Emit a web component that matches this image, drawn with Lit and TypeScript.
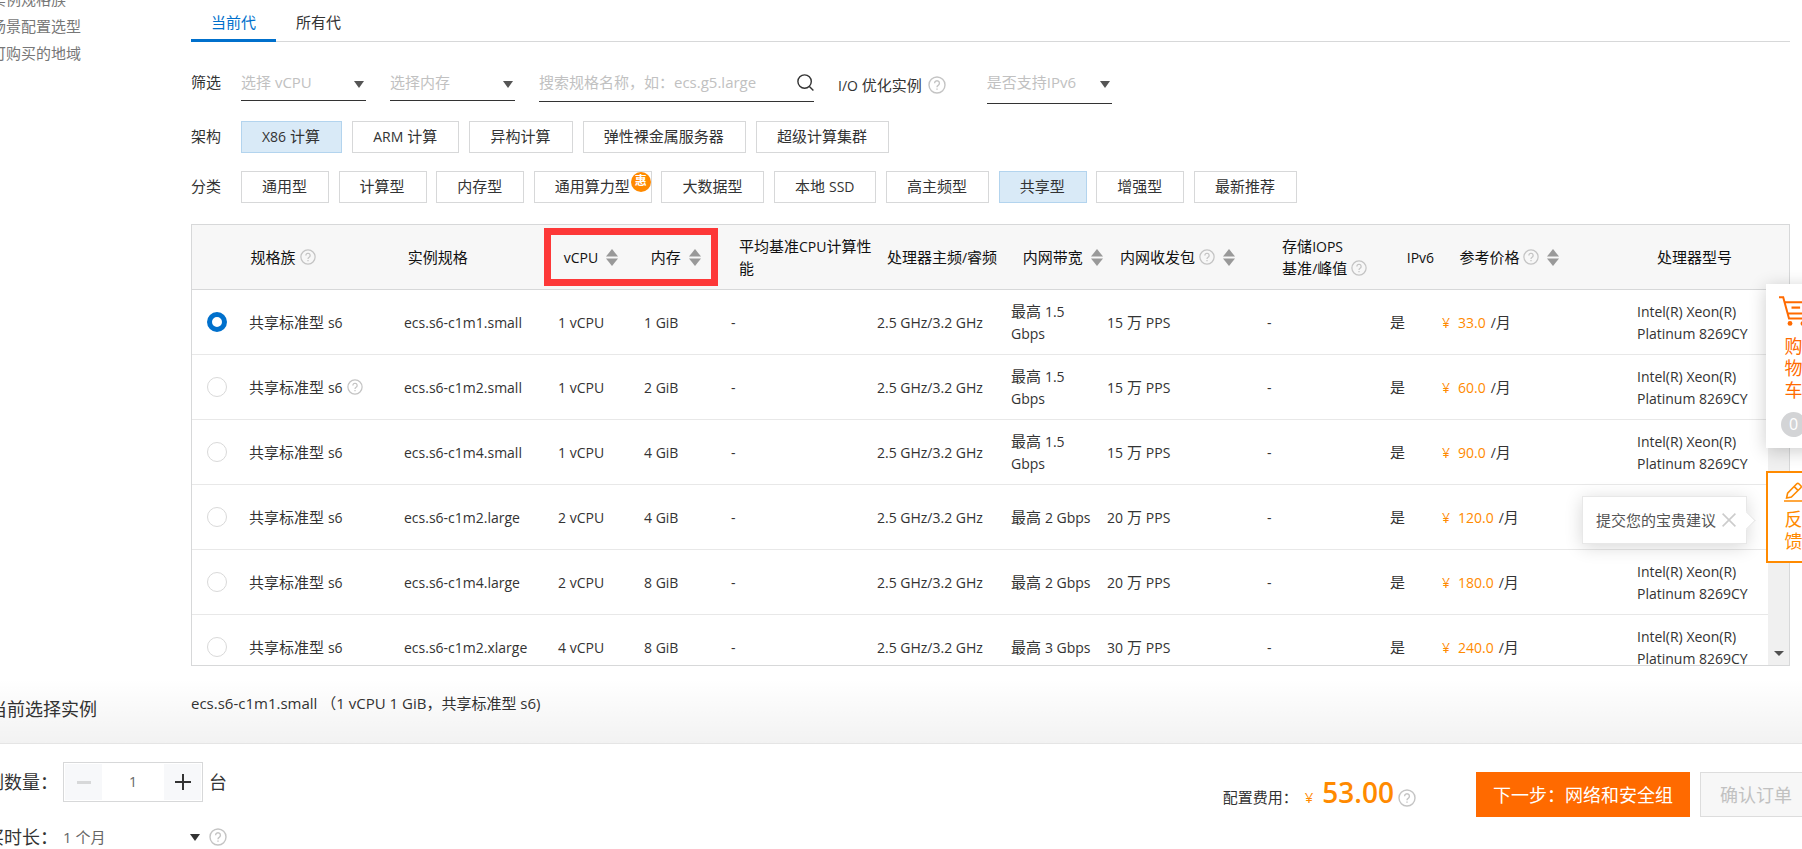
import { LitElement, html, svg, css, nothing } from "lit";
import { customElement, property, state } from "lit/decorators.js";
import { classMap } from "lit/directives/class-map.js";

/* Latin runs are set one step smaller than the Chinese text around them. */
const mix = (text: string) =>
  text
    .split(/([\x21-\x7e]+(?: +[\x21-\x7e]+)*)/)
    .filter((part) => part !== "")
    .map((part) => (/^[\x20-\x7e]+$/.test(part) ? html`<span class="lat">${part}</span>` : part));

const base = css`
  * {
    box-sizing: border-box;
  }
  .lat {
    font-size: 14px;
    line-height: 16px;
  }
  button,
  input,
  select {
    font: inherit;
    color: inherit;
    margin: 0;
    border-radius: 0;
  }
`;

@customElement("help-icon")
class HelpIcon extends LitElement {
  @property({ type: Number }) size = 16;
  static styles = css`
    :host {
      display: inline-flex;
      flex: none;
      color: #c4c4c4;
    }
  `;
  render() {
    return html`<svg width=${this.size} height=${this.size} viewBox="0 0 18 18" fill="none" stroke="currentColor" stroke-width="1.4" aria-hidden="true">
      <circle cx="9" cy="9" r="8"></circle>
      <path d="M6.6 7.2a2.4 2.4 0 1 1 3.6 2.1c-.8.5-1.2.9-1.2 1.9"></path>
      <path d="M9 12.4v1.4"></path>
    </svg>`;
  }
}

@customElement("sort-icon")
class SortIcon extends LitElement {
  static styles = css`
    :host {
      display: inline-flex;
      flex: none;
      color: #999;
    }
  `;
  render() {
    return html`<svg width="12" height="17" viewBox="0 0 12 17" fill="currentColor" aria-hidden="true">
      <path d="M6 0l6 7.5H0z"></path>
      <path d="M6 17l6-7.5H0z"></path>
    </svg>`;
  }
}

interface Column {
  label: string;
  second?: string;
  width: number;
  help?: boolean;
  sort?: boolean;
  wrap?: boolean;
}

const COLUMNS: Column[] = [
  { label: "", width: 45 },
  { label: "规格族", width: 155, help: true },
  { label: "实例规格", width: 154 },
  { label: "vCPU", width: 86, sort: true },
  { label: "内存", width: 87, sort: true },
  { label: "平均基准CPU计算性能", width: 146, wrap: true },
  { label: "处理器主频/睿频", width: 134 },
  { label: "内网带宽", width: 96, sort: true },
  { label: "内网收发包", width: 160, help: true, sort: true },
  { label: "存储IOPS", second: "基准/峰值", width: 123, help: true },
  { label: "IPv6", width: 52 },
  { label: "参考价格", width: 195, help: true, sort: true },
  { label: "处理器型号", width: 143 },
];
const TOTAL = COLUMNS.reduce((sum, c) => sum + c.width, 0);

const ROWS = [
  { spec: "ecs.s6-c1m1.small", cpu: 1, mem: 1, bw: "1.5", pps: 15, price: "33.0" },
  { spec: "ecs.s6-c1m2.small", cpu: 1, mem: 2, bw: "1.5", pps: 15, price: "60.0", help: true },
  { spec: "ecs.s6-c1m4.small", cpu: 1, mem: 4, bw: "1.5", pps: 15, price: "90.0" },
  { spec: "ecs.s6-c1m2.large", cpu: 2, mem: 4, bw: "2", pps: 20, price: "120.0" },
  { spec: "ecs.s6-c1m4.large", cpu: 2, mem: 8, bw: "2", pps: 20, price: "180.0" },
  { spec: "ecs.s6-c1m2.xlarge", cpu: 4, mem: 8, bw: "3", pps: 30, price: "240.0" },
];

@customElement("spec-table")
class SpecTable extends LitElement {
  @state() private selected = 0;

  static styles = [
    base,
    css`
      :host {
        display: block;
        border: 1px solid #d7d8d9;
      }
      table {
        width: 100%;
        table-layout: fixed;
        border-collapse: separate;
        border-spacing: 0;
      }
      .head {
        position: relative;
        background: #f7f7f7;
        border-bottom: 1px solid #d7d8d9;
      }
      th {
        height: 64px;
        padding: 0 0 0 13px;
        text-align: left;
        font-weight: 400;
        color: #111;
      }
      .label {
        display: flex;
        align-items: center;
        gap: 4px;
        white-space: nowrap;
      }
      .label.wrap {
        white-space: normal;
      }
      .label sort-icon {
        margin-left: 4px;
      }
      .mark {
        position: absolute;
        top: 3px;
        left: 352px;
        width: 174px;
        height: 58px;
        border: 7px solid #fd3838;
        pointer-events: none;
      }
      .body {
        display: flex;
        height: 375px;
        overflow: hidden;
      }
      .rows {
        flex: 1;
        min-width: 0;
      }
      .rail {
        flex: none;
        width: 21px;
        background: #f0f0f0;
        display: flex;
        align-items: flex-end;
        justify-content: center;
        padding-bottom: 9px;
      }
      td {
        height: 65px;
        padding: 0 0 0 12px;
        border-bottom: 1px solid #e8e8e8;
      }
      td.pick {
        padding-left: 15px;
      }
      input {
        display: block;
        appearance: none;
        width: 20px;
        height: 20px;
        border: 1px solid #d9d9d9;
        border-radius: 50%;
        background: #fff;
      }
      input:checked {
        border: 5px solid #0070cc;
      }
      .cell {
        display: flex;
        align-items: center;
        gap: 4px;
        white-space: nowrap;
      }
      .price {
        color: #ff8a00;
        margin-right: 5px;
      }
      .price .amount {
        margin-left: 8px;
      }
    `,
  ];

  private cols() {
    return html`<colgroup>
      ${COLUMNS.map((c) => html`<col style="width:${(c.width / TOTAL) * 100}%" />`)}
    </colgroup>`;
  }

  render() {
    return html`
      <div class="head">
        <table aria-label="规格表头">
          ${this.cols()}
          <thead>
            <tr>
              ${COLUMNS.map(
                (c) => html`<th>
                  ${c.second ? html`<div class="label"><span>${mix(c.label)}</span></div>` : nothing}
                  <div class=${classMap({ label: true, wrap: !!c.wrap })}>
                    <span>${mix(c.second ?? c.label)}</span>
                    ${c.help ? html`<help-icon></help-icon>` : nothing}
                    ${c.sort ? html`<sort-icon></sort-icon>` : nothing}
                  </div>
                </th>`
              )}
            </tr>
          </thead>
        </table>
        <div class="mark"></div>
      </div>
      <div class="body">
        <div class="rows">
          <table aria-label="实例规格">
            ${this.cols()}
            <tbody>
              ${ROWS.map(
                (r, i) => html`<tr>
                  <td class="pick">
                    <input type="radio" name="spec" aria-label=${r.spec} .checked=${i === this.selected} @change=${() => (this.selected = i)} />
                  </td>
                  <td>
                    <div class="cell"><span>${mix("共享标准型 s6")}</span>${r.help ? html`<help-icon></help-icon>` : nothing}</div>
                  </td>
                  <td>${mix(r.spec)}</td>
                  <td>${mix(`${r.cpu} vCPU`)}</td>
                  <td>${mix(`${r.mem} GiB`)}</td>
                  <td>${mix("-")}</td>
                  <td>${mix("2.5 GHz/3.2 GHz")}</td>
                  <td>${mix(`最高 ${r.bw} Gbps`)}</td>
                  <td>${mix(`${r.pps} 万 PPS`)}</td>
                  <td>${mix("-")}</td>
                  <td>是</td>
                  <td>
                    <span class="price lat">¥<span class="amount">${r.price}</span></span>${mix("/月")}
                  </td>
                  <td>${mix("Intel(R) Xeon(R) Platinum 8269CY")}</td>
                </tr>`
              )}
            </tbody>
          </table>
        </div>
        <div class="rail">
          <svg width="10" height="5" viewBox="0 0 10 5" fill="#505050" aria-hidden="true"><path d="M0 0h10L5 5z"></path></svg>
        </div>
      </div>
    `;
  }
}

const ARCH = ["X86 计算", "ARM 计算", "异构计算", "弹性裸金属服务器", "超级计算集群"];
const KINDS = ["通用型", "计算型", "内存型", "通用算力型", "大数据型", "本地 SSD", "高主频型", "共享型", "增强型", "最新推荐"];

const caret = svg`<path d="M0 0h10L5 7z"></path>`;

@customElement("app-root")
class AppRoot extends LitElement {
  @state() private arch = "X86 计算";
  @state() private kind = "共享型";
  @state() private count = 1;

  static styles = [
    base,
    css`
      :host {
        display: flex;
        flex-direction: column;
        height: 100vh;
        position: relative;
        overflow: hidden;
        background: #fff;
        color: #333;
        font: 15px/22px "Open Sans", "Noto Sans CJK SC", sans-serif;
      }
      .page {
        flex: 1;
        min-height: 0;
        overflow: hidden;
        position: relative;
        display: grid;
        grid-template-columns: 191px minmax(0, 1fr);
        grid-template-rows: auto 1fr;
        padding-right: 12px;
      }
      .fade {
        position: absolute;
        inset: auto 0 0 0;
        height: 64px;
        background: linear-gradient(rgba(0, 0, 0, 0), rgba(0, 0, 0, 0.05));
        pointer-events: none;
      }
      nav {
        display: flex;
        flex-direction: column;
        gap: 5px;
        margin: -12px 0 0 -9px;
      }
      nav a {
        color: #777;
        text-decoration: none;
        white-space: nowrap;
      }
      .tabs {
        display: flex;
        height: 42px;
        border-bottom: 1px solid #d7d8d9;
      }
      .tab {
        height: 42px;
        padding: 4px 20px 0;
        border: 0;
        border-bottom: 3px solid transparent;
        background: none;
      }
      .tab.on {
        color: #0070cc;
        border-bottom-color: #0070cc;
      }
      .line {
        display: grid;
        grid-template-columns: 50px minmax(0, 1fr);
        align-items: center;
        margin-bottom: 18px;
      }
      .line > span {
        padding-bottom: 2px;
      }
      .filters {
        align-items: start;
        margin-top: 24px;
        margin-bottom: 17px;
      }
      .filters > span {
        line-height: 32px;
      }
      .fields {
        display: flex;
        gap: 24px;
        align-items: flex-start;
      }
      .pick {
        position: relative;
        width: 125px;
      }
      .pick svg {
        position: absolute;
        right: 2px;
        top: 15px;
        fill: #555;
        pointer-events: none;
      }
      .pick select,
      .search {
        width: 100%;
        height: 35px;
        padding: 0 0 3px;
        appearance: none;
        border: 0;
        border-bottom: 1px solid #333;
        background: none;
        color: #c1c1c1;
        outline: none;
      }
      .pick.tall select {
        height: 38px;
        padding-bottom: 6px;
      }
      .search {
        display: flex;
        align-items: center;
        width: 275px;
        height: 36px;
      }
      .search input {
        flex: 1;
        min-width: 0;
        padding: 0;
        border: 0;
        outline: 0;
        background: none;
        height: 30px;
      }
      .search input::placeholder {
        color: #c1c1c1;
      }
      .search button {
        display: flex;
        padding: 0;
        border: 0;
        background: none;
        color: #333;
      }
      .io {
        display: flex;
        align-items: center;
        gap: 6px;
        height: 38px;
        margin-right: 17px;
      }
      .options {
        display: flex;
        justify-content: space-between;
      }
      .options.arch {
        max-width: 648px;
      }
      .options.kinds {
        max-width: 1056px;
      }
      .option {
        position: relative;
        height: 32px;
        padding: 0 21px 2px 20px;
        border: 1px solid #d7d8d9;
        background: #fff;
        white-space: nowrap;
      }
      .option.on {
        border-color: #b3d4ee;
        background: #d9eaf7;
      }
      .hot {
        position: absolute;
        top: 0;
        right: 0;
        width: 20px;
        height: 20px;
        border-radius: 50%;
        background: #ff8a00;
        color: #fff;
        font-size: 12px;
        font-weight: 700;
        line-height: 18px;
        text-align: center;
      }
      spec-table {
        margin-top: 21px;
      }
      .current {
        margin: 0;
        padding-top: 32px;
        font-size: 18px;
        margin-left: -11px;
        font-weight: 400;
        white-space: nowrap;
      }
      .chosen {
        margin: 0;
        padding-top: 26px;
      }
      .chosen .lat {
        font-size: 15px;
      }
      footer {
        display: flex;
        justify-content: space-between;
        height: 106px;
        border-top: 1px solid #e5e5e5;
        background: #fff;
      }
      .order {
        display: grid;
        grid-template-columns: 95px auto;
        grid-template-rows: 40px 22px;
        row-gap: 24px;
        align-items: center;
        justify-content: start;
        margin-left: -32px;
        padding-top: 18px;
      }
      .order label,
      .unit {
        font-size: 18px;
        white-space: nowrap;
      }
      .qty,
      .term {
        display: flex;
        align-items: center;
      }
      .qty {
        gap: 6px;
      }
      .stepper {
        display: flex;
        width: 140px;
        height: 40px;
        padding: 1px;
        border: 1px solid #d7d8d9;
      }
      .stepper button {
        display: flex;
        align-items: center;
        justify-content: center;
        width: 37px;
        padding: 0;
        border: 0;
        background: #f7f8fa;
      }
      .stepper input {
        flex: 1;
        min-width: 0;
        padding: 0;
        border: 0;
        color: #666;
        font-size: 14px;
        text-align: center;
      }
      .term {
        gap: 8px;
      }
      .term .pick {
        width: 138px;
      }
      .term select {
        height: 22px;
        padding: 0;
        border: 0;
        color: #666;
      }
      .term .pick svg {
        top: 8px;
        fill: #333;
        right: 1px;
      }
      .pay {
        display: flex;
        align-items: flex-start;
        margin-right: -10px;
        padding-top: 28px;
        white-space: nowrap;
      }
      .cost {
        display: flex;
        align-items: baseline;
        margin-right: 60px;
        line-height: 40px;
      }
      .cost .yen {
        margin: 0 9px 0 7px;
        color: #ff8a00;
      }
      .cost strong {
        color: #ff8a00;
        font-size: 28px;
        font-weight: 600;
      }
      .cost help-icon {
        align-self: center;
        margin: 7px 0 0 4px;
      }
      .go,
      .confirm {
        height: 45px;
        font-size: 18px;
      }
      .go {
        padding: 0 17px;
        margin-right: 10px;
        border: 0;
        background: #ff6a00;
        color: #fff;
      }
      .confirm {
        padding: 0 19px;
        border: 1px solid #ddd;
        background: #f7f7f7;
        color: #c1c1c1;
      }
      .cart,
      .feedback {
        position: absolute;
        right: -19px;
        width: 55px;
        display: flex;
        flex-direction: column;
        align-items: center;
        border: 0;
        background: #fff;
        font-size: 18px;
        color: #ff6a00;
      }
      .cart {
        top: 284px;
        padding: 12px 18px 11px;
        box-shadow: 0 3px 18px rgba(0, 0, 0, 0.2);
      }
      .cart svg {
        margin: 0 -5px;
      }
      .cart .word {
        margin: 9px 0 11px;
      }
      .bubble {
        width: 25px;
        height: 25px;
        border-radius: 50%;
        background: #d3d4d6;
        color: #fff;
        font-size: 16px;
        line-height: 25px;
      }
      .feedback {
        top: 471px;
        padding: 9px 16px 9px;
        border: 2px solid #ff8a00;
        color: #ff8a00;
      }
      .feedback .word {
        margin-top: 6px;
      }
      .tip {
        position: absolute;
        top: 496px;
        right: 55px;
        display: flex;
        align-items: center;
        gap: 6px;
        height: 48px;
        padding: 0 10px 0 13px;
        border: 1px solid #e8e8e8;
        background: #fff;
        box-shadow: 0 3px 18px rgba(0, 0, 0, 0.16);
        color: #555;
      }
      .tip::after {
        content: "";
        position: absolute;
        right: -7px;
        top: 17px;
        width: 12px;
        height: 12px;
        border: solid #e8e8e8;
        border-width: 1px 1px 0 0;
        background: #fff;
        transform: rotate(45deg);
      }
      .tip button {
        display: flex;
        padding: 0;
        border: 0;
        background: none;
      }
    `,
  ];

  private select(label: string, tall = false) {
    return html`<div class=${classMap({ pick: true, tall })}>
      <select aria-label=${label}>
        <option>${label}</option>
      </select>
      <svg width="10" height="7" viewBox="0 0 10 7" aria-hidden="true">${caret}</svg>
    </div>`;
  }

  private option(name: string, on: boolean, choose: () => void) {
    return html`<button class=${classMap({ option: true, on })} @click=${choose}>
      ${mix(name)}${name === "通用算力型" ? html`<span class="hot">惠</span>` : nothing}
    </button>`;
  }

  render() {
    return html`
      <main class="page">
        <nav>
          <a href="#family">实例规格族</a>
          <a href="#scene">场景配置选型</a>
          <a href="#region">可购买的地域</a>
        </nav>
        <section>
          <div class="tabs">
            <button class="tab on">当前代</button>
            <button class="tab">所有代</button>
          </div>
          <div class="line filters">
            <span>筛选</span>
            <div class="fields">
              ${this.select("选择 vCPU")} ${this.select("选择内存")}
              <div class="search">
                <input type="text" aria-label="搜索规格名称" placeholder="搜索规格名称，如：ecs.g5.large" />
                <button aria-label="搜索">
                  <svg width="17" height="17" viewBox="0 0 17 17" fill="none" stroke="currentColor" stroke-width="1.4">
                    <circle cx="7.6" cy="7.6" r="6.7"></circle>
                    <path d="M12.4 12.4l4 4"></path>
                  </svg>
                </button>
              </div>
              <div class="io"><span>${mix("I/O 优化实例")}</span><help-icon .size=${18}></help-icon></div>
              ${this.select("是否支持IPv6", true)}
            </div>
          </div>
          <div class="line">
            <span>架构</span>
            <div class="options arch">${ARCH.map((n) => this.option(n, n === this.arch, () => (this.arch = n)))}</div>
          </div>
          <div class="line">
            <span>分类</span>
            <div class="options kinds">${KINDS.map((n) => this.option(n, n === this.kind, () => (this.kind = n)))}</div>
          </div>
          <spec-table></spec-table>
        </section>
        <h2 class="current">当前选择实例</h2>
        <p class="chosen">${mix("ecs.s6-c1m1.small （1 vCPU 1 GiB，共享标准型 s6)")}</p>
        <div class="fade"></div>
      </main>

      <footer>
        <div class="order">
          <label for="count">实例数量：</label>
          <div class="qty">
            <div class="stepper">
              <button aria-label="减少" @click=${() => (this.count = Math.max(1, this.count - 1))}>
                <svg width="14" height="3" viewBox="0 0 14 3" fill="#d7d8d9"><path d="M0 0h14v3H0z"></path></svg>
              </button>
              <input id="count" type="text" .value=${String(this.count)} />
              <button aria-label="增加" @click=${() => (this.count += 1)}>
                <svg width="16" height="16" viewBox="0 0 16 16" fill="#333"><path d="M7 0h2v7h7v2H9v7H7V9H0V7h7z"></path></svg>
              </button>
            </div>
            <span class="unit">台</span>
          </div>
          <label for="term">购买时长：</label>
          <div class="term">
            <div class="pick">
              <select id="term">
                <option>1 个月</option>
              </select>
              <svg width="10" height="7" viewBox="0 0 10 7" aria-hidden="true">${caret}</svg>
            </div>
            <help-icon .size=${18}></help-icon>
          </div>
        </div>
        <div class="pay">
          <div class="cost">
            <span>配置费用：</span><span class="yen">¥</span><strong>53.00</strong><help-icon .size=${18}></help-icon>
          </div>
          <button class="go">下一步：网络和安全组</button>
          <button class="confirm" disabled>确认订单</button>
        </div>
      </footer>

      <button class="cart">
        <svg width="30" height="30" viewBox="0 0 30 30" fill="none" stroke="currentColor" stroke-width="2">
          <path d="M0 1.2h4.2L10 22.6h18"></path>
          <path d="M5.6 6.2H29l-2.8 11.4H8.8"></path>
          <path d="M12.5 11.6h8.6" stroke-width="2.2"></path>
          <circle cx="11" cy="27.4" r="2.4" fill="currentColor" stroke="none"></circle>
          <circle cx="24" cy="27.4" r="2.4" fill="currentColor" stroke="none"></circle>
        </svg>
        <span class="word">购物车</span>
        <span class="bubble">0</span>
      </button>

      <div class="tip">
        <span>提交您的宝贵建议</span>
        <button aria-label="关闭">
          <svg width="14" height="14" viewBox="0 0 14 14" fill="none" stroke="#ccc" stroke-width="1.6"><path d="M.6.6l12.8 12.8M13.4.6L.6 13.4"></path></svg>
        </button>
      </div>

      <button class="feedback">
        <svg width="20" height="20" viewBox="0 0 20 20" fill="none" stroke="currentColor" stroke-width="1.6">
          <path d="M2.6 16l1-4.8L12.8 1.8a1.4 1.4 0 0 1 2 0l2 2a1.4 1.4 0 0 1 0 2L7.4 15z"></path>
          <path d="M10.2 4.6l3.8 3.8M0 19h20"></path>
        </svg>
        <span class="word">反馈</span>
      </button>
    `;
  }
}
